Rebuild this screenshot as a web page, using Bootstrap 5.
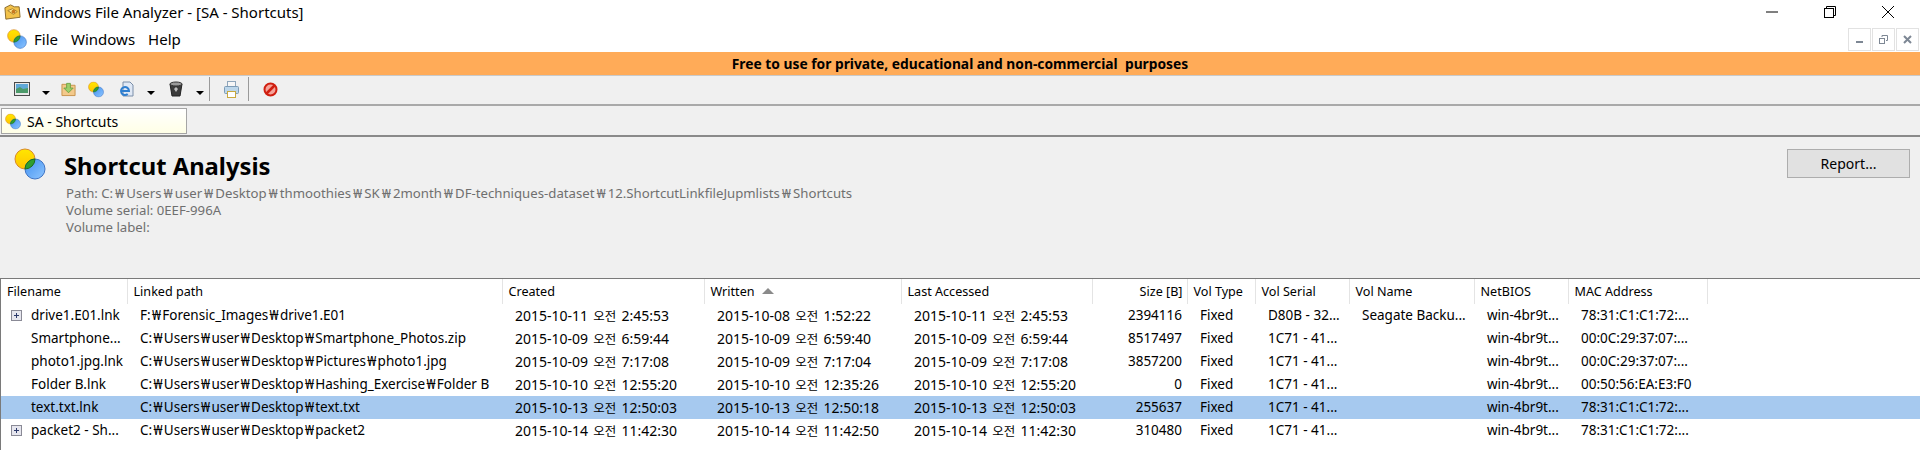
<!DOCTYPE html>
<html lang="ko">

<head>
    <meta charset="UTF-8">
    <title>Windows File Analyzer - [SA - Shortcuts]</title>
    <link href="https://cdn.jsdelivr.net/npm/bootstrap@5.3.0/dist/css/bootstrap.min.css" rel="stylesheet">
    <style>
        html, body {
            height: 450px;
            overflow: hidden;
        }

        body {
            background: #fff;
            color: #000;
            font-family: "Noto Sans", "Noto Sans CJK KR", sans-serif;
            font-size: 13.5px;
            line-height: 17px;
        }

        .title-bar {
            height: 26px;
            padding: 0 0 2px 3px;
            font-size: 15px;
        }

        .title-text { margin-left: 5px; }

        .win-btns { margin-right: 26px; gap: 46px; }

        .menu-row {
            height: 26px;
            padding-left: 7px;
            font-size: 15px;
        }

        .menu-items { margin-left: 7px; gap: 13px; }

        .mdi-btns { gap: 1px; margin-right: 1px; }

        .mdi-btn {
            width: 23px;
            height: 23px;
            border: 1px solid #e2e2e2;
        }

        .notice-bar {
            height: 24px;
            background: #ffab58;
            border-bottom: 1px solid #c9c9c9;
            font-weight: 700;
            font-size: 13.8px;
        }

        .tool-strip {
            height: 30px;
            background: #f0f0f0;
            border-bottom: 2px solid #a9a9a9;
            padding: 0 0 2px 14px;
        }

        .tool-sep {
            width: 1px;
            height: 24px;
            background: #9a9a9a;
        }

        .caret-down {
            width: 0;
            height: 0;
            border-left: 4px solid transparent;
            border-right: 4px solid transparent;
            border-top: 4px solid #000;
            margin-top: 8px;
        }

        .tab-strip {
            height: 31px;
            background: #f0f0f0;
            border-bottom: 2px solid #8a8a8a;
            padding: 2px 0 0 1px;
        }

        .doc-tab {
            width: 186px;
            height: 26px;
            border: 1px solid #a5a5a5;
            background: linear-gradient(#fff, #ffffe6);
            padding-left: 3px;
            gap: 6px;
            font-size: 14px;
        }

        .head-panel {
            height: 141px;
            background: #f0f0f0;
            padding: 11px 10px 0 14px;
        }

        .info-block { margin-left: 18px; padding-top: 3px; }

        .panel-title {
            font-size: 23.800px;
            font-weight: 700;
            line-height: 30px;
            margin: 0 0 4px 0;
        }

        .panel-info {
            color: #6f6f6f;
            margin-left: 2px;
            line-height: 17px;
            font-size: 13.2px;
        }

        .panel-info .won-sep { margin: 0 2.200px; }

        .report-btn {
            width: 123px;
            height: 29px;
            margin-top: 1px;
            padding: 0 0 1px;
            background: #e1e1e1;
            border: 1px solid #adadad;
            border-radius: 0;
            color: #000;
            font-size: 14px;
        }

        .grid-wrap {
            height: 173px;
            border-top: 1px solid #7a7a7a;
            border-left: 1px solid #7a7a7a;
        }

        .file-grid {
            table-layout: fixed;
            width: 100%;
            margin: 0;
            color: #000;
        }

        .file-grid th, .file-grid td {
            padding: 0;
            border: 0;
            height: 23px;
            white-space: nowrap;
            overflow: hidden;
            vertical-align: middle;
            font-weight: 400;
        }

        .file-grid th {
            height: 25px;
            padding-left: 6px;
            border-right: 1px solid #e4e4e4;
            font-size: 12.6px;
        }

        .file-grid th:last-child { border-right: 0; }

        .file-grid td { padding-left: 13px; }

        .file-grid tr.picked td { background: #a6c9ef; }

        .file-grid .num-col { text-align: right; padding: 0 5px 0 0; }

        .file-grid th.num-col { padding-right: 4px; }

        .file-grid td.name-col { padding-left: 0; }

        .file-grid td.stamp-col { font-size: 14px; }

        /* the 오전 marker is smaller than the digits around it */
        .day-part { font-size: 12.5px; margin: 0 1.500px; }

        /* the won sign used as path separator runs wider than the font's own */
        .won-sep { margin: 0 1.300px; }

        .tree-slot {
            width: 30px;
            flex: none;
            padding-left: 10px;
        }

        .tree-box {
            width: 11px;
            height: 11px;
            flex: none;
        }

        .sort-mark {
            display: inline-block;
            width: 0;
            height: 0;
            margin-left: 7px;
            border-left: 6px solid transparent;
            border-right: 6px solid transparent;
            border-bottom: 6px solid #8a8a8a;
            vertical-align: 2px;
        }

        .w-name { width: 126px; }
        .w-path { width: 375px; }
        .w-created { width: 202px; }
        .w-written { width: 197px; }
        .w-access { width: 191px; }
        .w-size { width: 95px; }
        .w-type { width: 68px; }
        .w-serial { width: 94px; }
        .w-vname { width: 125px; }
        .w-bios { width: 94px; }
        .w-mac { width: 139px; }

        .gap-a { margin-left: 12px; }
        .gap-b { margin-left: 11px; }
        .gap-c { margin-left: 13px; }
        .gap-d { margin-left: 15px; }
        .gap-e { margin-left: 5px; }
        .gap-f { margin-left: 14px; }
        .gap-g { margin-left: 9px; }
    </style>
</head>

<body>
    <svg width="0" height="0" class="position-absolute">
        <defs>
            <linearGradient id="venn-yellow" x1="0" y1="0" x2="0" y2="1">
                <stop offset="0" stop-color="#ffe600"/>
                <stop offset="1" stop-color="#ffc400"/>
            </linearGradient>
            <linearGradient id="venn-blue" x1="1" y1="1" x2="0" y2="0">
                <stop offset="0" stop-color="#8fc6ff"/>
                <stop offset="1" stop-color="#3f8ff0"/>
            </linearGradient>
            <symbol id="venn" viewBox="0 0 32 32">
                <circle cx="11" cy="11" r="10" fill="url(#venn-yellow)" stroke="#d98a2b"/>
                <circle cx="21" cy="21" r="10" fill="url(#venn-blue)" stroke="#3f74c4"/>
                <path d="M11 21A10 10 0 0 1 21 11A10 10 0 0 1 11 21z" fill="#2f9e2f" stroke="#1d6d1d"/>
            </symbol>
            <symbol id="tree-plus" viewBox="0 0 11 11">
                <rect x=".5" y=".5" width="10" height="10" fill="#e6e6ee" stroke="#8a8a96"/>
                <path d="M3 5.500h5M5.500 3v5" stroke="#2c3a6b"/>
            </symbol>
        </defs>
    </svg>

    <div class="title-bar d-flex align-items-center">
        <svg width="19" height="19" viewBox="0 0 20 20">
            <path d="M2 5l6-3 4 2 5 0 1 11-15 2z" fill="#f2c24a" stroke="#8a6a2c"/>
            <path d="M5 8l5-2 5 3-4 3z" fill="#fbe48e" stroke="#a9822f"/>
            <circle cx="11" cy="9" r="2" fill="#c9781f"/>
        </svg>
        <span class="title-text">Windows File Analyzer - [SA - Shortcuts]</span>
        <div class="win-btns d-flex align-items-center ms-auto">
            <svg width="12" height="12" viewBox="0 0 12 12"><path d="M0 6h12" stroke="#000"/></svg>
            <svg width="12" height="12" viewBox="0 0 12 12" fill="none" stroke="#000"><rect x=".5" y="2.500" width="9" height="9"/><path d="M2.500 2.500v-2h9v9h-2"/></svg>
            <svg width="12" height="12" viewBox="0 0 12 12"><path d="M0 0l12 12M12 0L0 12" stroke="#000"/></svg>
        </div>
    </div>

    <div class="menu-row d-flex align-items-center">
        <svg width="20" height="20" viewBox="0 0 32 32"><use href="#venn"/></svg>
        <div class="menu-items d-flex">
            <span>File</span>
            <span>Windows</span>
            <span>Help</span>
        </div>
        <div class="mdi-btns d-flex ms-auto">
            <div class="mdi-btn d-flex align-items-center justify-content-center">
                <svg width="9" height="9" viewBox="0 0 9 9"><path d="M1 7h7" stroke="#7d8794" stroke-width="2"/></svg>
            </div>
            <div class="mdi-btn d-flex align-items-center justify-content-center">
                <svg width="9" height="9" viewBox="0 0 9 9" fill="none" stroke="#7d8794"><rect x=".5" y="3.500" width="5" height="5"/><path d="M3 2V.5h5.500v5H7"/></svg>
            </div>
            <div class="mdi-btn d-flex align-items-center justify-content-center">
                <svg width="9" height="9" viewBox="0 0 9 9"><path d="M1 1l7 7M8 1L1 8" stroke="#7d8794" stroke-width="2"/></svg>
            </div>
        </div>
    </div>

    <div class="notice-bar d-flex align-items-center justify-content-center">Free to use for private, educational and non-commercial&nbsp; purposes</div>

    <div class="tool-strip d-flex align-items-center">
        <svg width="16" height="14" viewBox="0 0 16 14">
            <rect x=".5" y=".5" width="15" height="13" fill="#e8e8e8" stroke="#4a4a4a"/>
            <rect x="2" y="2" width="12" height="5" fill="#5fa8d8"/>
            <path d="M2 7l4-2 3 2 5-1v5H2z" fill="#4c9a6a"/>
        </svg>
        <span class="caret-down gap-a"></span>
        <svg class="gap-b" width="15" height="16" viewBox="0 0 16 16">
            <path d="M1 3h5l1 1h8v11H1z" fill="#f3c98b" stroke="#c8914a"/>
            <path d="M6 2h4v5h3l-5 5-5-5h3z" fill="#9ccf6a" stroke="#6fa244"/>
        </svg>
        <svg class="gap-a" width="16" height="17" viewBox="0 0 32 32"><use href="#venn"/></svg>
        <svg class="gap-d" width="16" height="17" viewBox="0 0 16 17">
            <path d="M4 1h7l3 3v11H4z" fill="#dfe8f5" stroke="#7a8ea8"/>
            <path d="M2 10h8a4 4 0 1 0-1.300 3" fill="none" stroke="#2f7fd0" stroke-width="2"/>
        </svg>
        <span class="caret-down gap-a"></span>
        <svg class="gap-f" width="14" height="16" viewBox="0 0 14 16">
            <path d="M1 3h12l-2 12H3z" fill="#3b3b3b" stroke="#222"/>
            <ellipse cx="7" cy="3" rx="6" ry="2" fill="#9a9a9a" stroke="#333"/>
            <path d="M5 8l2-2 2 2-2 3z" fill="#bdbdbd"/>
        </svg>
        <span class="caret-down gap-c"></span>
        <span class="tool-sep gap-e"></span>
        <svg class="gap-f" width="15" height="17" viewBox="0 0 15 17">
            <rect x="3.500" y=".5" width="8" height="5" fill="#f6f6f6" stroke="#8fa6bb"/>
            <rect x=".5" y="5.500" width="14" height="7" rx="1" fill="#bcd6ea" stroke="#7d9bb5"/>
            <rect x="3.500" y="10.500" width="8" height="6" fill="#fff" stroke="#c9a93d"/>
        </svg>
        <span class="tool-sep gap-g"></span>
        <svg class="gap-f" width="15" height="15" viewBox="0 0 15 15">
            <circle cx="7.500" cy="7.500" r="6" fill="#f6a39a" stroke="#d01f10" stroke-width="2"/>
            <path d="M3.500 11.500l8-8" stroke="#d01f10" stroke-width="2.500"/>
        </svg>
    </div>

    <div class="tab-strip">
        <div class="doc-tab d-flex align-items-center">
            <svg width="16" height="17" viewBox="0 0 32 32"><use href="#venn"/></svg>
            <span>SA - Shortcuts</span>
        </div>
    </div>

    <div class="head-panel d-flex align-items-start">
        <svg width="32" height="32" viewBox="0 0 32 32"><use href="#venn"/></svg>
        <div class="flex-grow-1 info-block">
            <h1 class="panel-title">Shortcut Analysis</h1>
            <div class="panel-info" id="panel-path">Path: C:₩Users₩user₩Desktop₩thmoothies₩SK₩2month₩DF-techniques-dataset₩12.ShortcutLinkfileJupmlists₩Shortcuts</div>
            <div class="panel-info">Volume serial: 0EEF-996A</div>
            <div class="panel-info">Volume label:</div>
        </div>
        <button type="button" class="btn report-btn">Report...</button>
    </div>

    <div class="grid-wrap">
        <table class="table file-grid">
            <colgroup>
                <col class="w-name"><col class="w-path"><col class="w-created"><col class="w-written"><col class="w-access"><col class="w-size"><col class="w-type"><col class="w-serial"><col class="w-vname"><col class="w-bios"><col class="w-mac"><col>
            </colgroup>
            <thead>
                <tr>
                    <th>Filename</th>
                    <th>Linked path</th>
                    <th>Created</th>
                    <th>Written<span class="sort-mark"></span></th>
                    <th>Last Accessed</th>
                    <th class="num-col">Size [B]</th>
                    <th>Vol Type</th>
                    <th>Vol Serial</th>
                    <th>Vol Name</th>
                    <th>NetBIOS</th>
                    <th>MAC Address</th>
                    <th></th>
                </tr>
            </thead>
            <tbody id="grid-body"></tbody>
        </table>
    </div>

    <script>
        const rows = [
            { tree: true, name: 'drive1.E01.lnk', path: 'F:₩Forensic_Images₩drive1.E01', created: '2015-10-11 오전 2:45:53', written: '2015-10-08 오전 1:52:22', access: '2015-10-11 오전 2:45:53', size: '2394116', serial: 'D80B - 32...', vname: 'Seagate Backu...', mac: '78:31:C1:C1:72:...' },
            { name: 'Smartphone...', path: 'C:₩Users₩user₩Desktop₩Smartphone_Photos.zip', created: '2015-10-09 오전 6:59:44', written: '2015-10-09 오전 6:59:40', access: '2015-10-09 오전 6:59:44', size: '8517497', serial: '1C71 - 41...', vname: '', mac: '00:0C:29:37:07:...' },
            { name: 'photo1.jpg.lnk', path: 'C:₩Users₩user₩Desktop₩Pictures₩photo1.jpg', created: '2015-10-09 오전 7:17:08', written: '2015-10-09 오전 7:17:04', access: '2015-10-09 오전 7:17:08', size: '3857200', serial: '1C71 - 41...', vname: '', mac: '00:0C:29:37:07:...' },
            { name: 'Folder B.lnk', path: 'C:₩Users₩user₩Desktop₩Hashing_Exercise₩Folder B', created: '2015-10-10 오전 12:55:20', written: '2015-10-10 오전 12:35:26', access: '2015-10-10 오전 12:55:20', size: '0', serial: '1C71 - 41...', vname: '', mac: '00:50:56:EA:E3:F0' },
            { picked: true, name: 'text.txt.lnk', path: 'C:₩Users₩user₩Desktop₩text.txt', created: '2015-10-13 오전 12:50:03', written: '2015-10-13 오전 12:50:18', access: '2015-10-13 오전 12:50:03', size: '255637', serial: '1C71 - 41...', vname: '', mac: '78:31:C1:C1:72:...' },
            { tree: true, name: 'packet2 - Sh...', path: 'C:₩Users₩user₩Desktop₩packet2', created: '2015-10-14 오전 11:42:30', written: '2015-10-14 오전 11:42:50', access: '2015-10-14 오전 11:42:30', size: '310480', serial: '1C71 - 41...', vname: '', mac: '78:31:C1:C1:72:...' }
        ];

        function wonPath(text) {
            return text.replaceAll('₩', '<span class="won-sep">₩</span>');
        }

        function stamp(text) {
            return text.replace('오전', '<span class="day-part">오전</span>');
        }

        const panelPath = document.getElementById('panel-path');
        panelPath.innerHTML = wonPath(panelPath.textContent);

        // Fill the grid body
        const body = document.getElementById('grid-body');
        rows.forEach(function (r) {
            const tr = document.createElement('tr');
            if (r.picked) tr.className = 'picked';
            const box = r.tree ? '<svg class="tree-box" viewBox="0 0 11 11"><use href="#tree-plus"/></svg>' : '';
            tr.innerHTML = `
                <td class="name-col"><div class="d-flex align-items-center"><span class="tree-slot d-flex">${box}</span><span>${r.name}</span></div></td>
                <td>${wonPath(r.path)}</td>
                <td class="stamp-col">${stamp(r.created)}</td>
                <td class="stamp-col">${stamp(r.written)}</td>
                <td class="stamp-col">${stamp(r.access)}</td>
                <td class="num-col">${r.size}</td>
                <td>Fixed</td>
                <td>${r.serial}</td>
                <td>${r.vname}</td>
                <td>win-4br9t...</td>
                <td>${r.mac}</td>
                <td></td>
            `;
            body.appendChild(tr);
        });
    </script>
    <script src="https://cdn.jsdelivr.net/npm/bootstrap@5.3.0/dist/js/bootstrap.bundle.min.js"></script>
</body>

</html>
